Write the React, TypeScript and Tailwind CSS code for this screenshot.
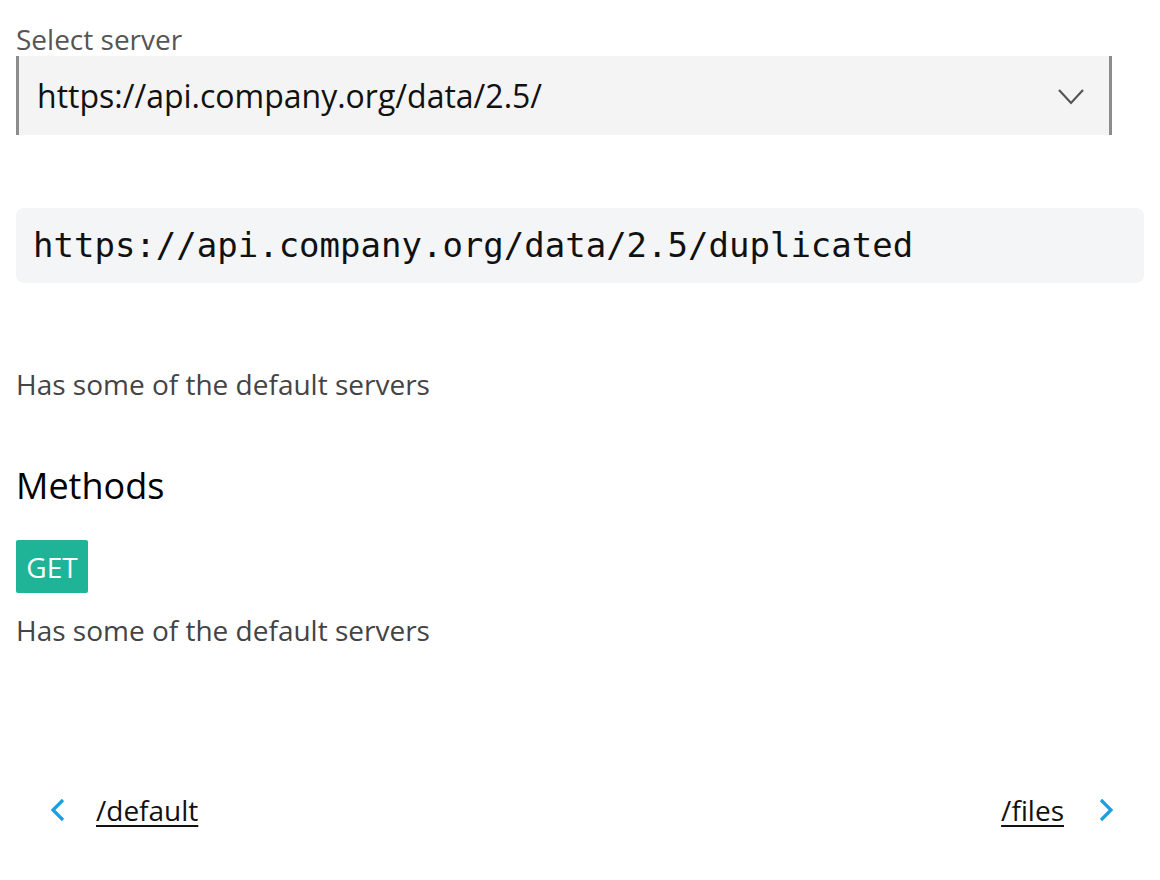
import React from "react";

export default function App() {
  return (
    <div className="min-h-[880px] w-[1160px] bg-white px-4 pt-[22px]" style={{ fontFamily: '"Open Sans", "Noto Sans", sans-serif' }}>
      <div className="text-[28px] leading-[34px] text-[#555555]">Select server</div>
      <div className="flex h-[79px] w-[1096px] items-center justify-between border-x-[3px] border-[#8c8c8c] bg-[#f4f4f4] pl-[18px] pr-[24px]">
        <span className="text-[32px] text-[#111111]">https://api.company.org/data/2.5/</span>
        <svg width="28" height="20" viewBox="0 0 28 20" fill="none">
          <path d="M2 4 L14 17 L26 4" stroke="#555555" strokeWidth="2.2" />
        </svg>
      </div>
      <div className="mt-[73px] flex h-[75px] items-center rounded-[8px] bg-[#f4f5f7] pl-[17px]">
        <span className="text-[34px] text-[#111111]" style={{ fontFamily: '"DejaVu Sans Mono", monospace' }}>
          https://api.company.org/data/2.5/duplicated
        </span>
      </div>
      <div className="mt-[82px] text-[28px] leading-[38px] text-[#444444]">Has some of the default servers</div>
      <div className="mt-[62px] text-[36px] leading-[42px] text-black">Methods</div>
      <div className="mt-[33px] flex h-[53px] w-[72px] items-center justify-center rounded-[2px] bg-[#1fb497] text-[28px] text-white">GET</div>
      <div className="mt-[18px] text-[28px] leading-[38px] text-[#444444]">Has some of the default servers</div>
      <div className="mt-[140px] flex items-center justify-between pl-[34px] pr-[30px]">
        <div className="flex items-center gap-[30px]">
          <svg width="16" height="24" viewBox="0 0 16 24" fill="none">
            <path d="M13 2 L3 12 L13 22" stroke="#1a9fe0" strokeWidth="3.2" />
          </svg>
          <span className="text-[28px] text-[#111111] underline underline-offset-[4px]">/default</span>
        </div>
        <div className="flex items-center gap-[34px]">
          <span className="text-[28px] text-[#111111] underline underline-offset-[4px]">/files</span>
          <svg width="16" height="24" viewBox="0 0 16 24" fill="none">
            <path d="M3 2 L13 12 L3 22" stroke="#1a9fe0" strokeWidth="3.2" />
          </svg>
        </div>
      </div>
    </div>
  );
}
